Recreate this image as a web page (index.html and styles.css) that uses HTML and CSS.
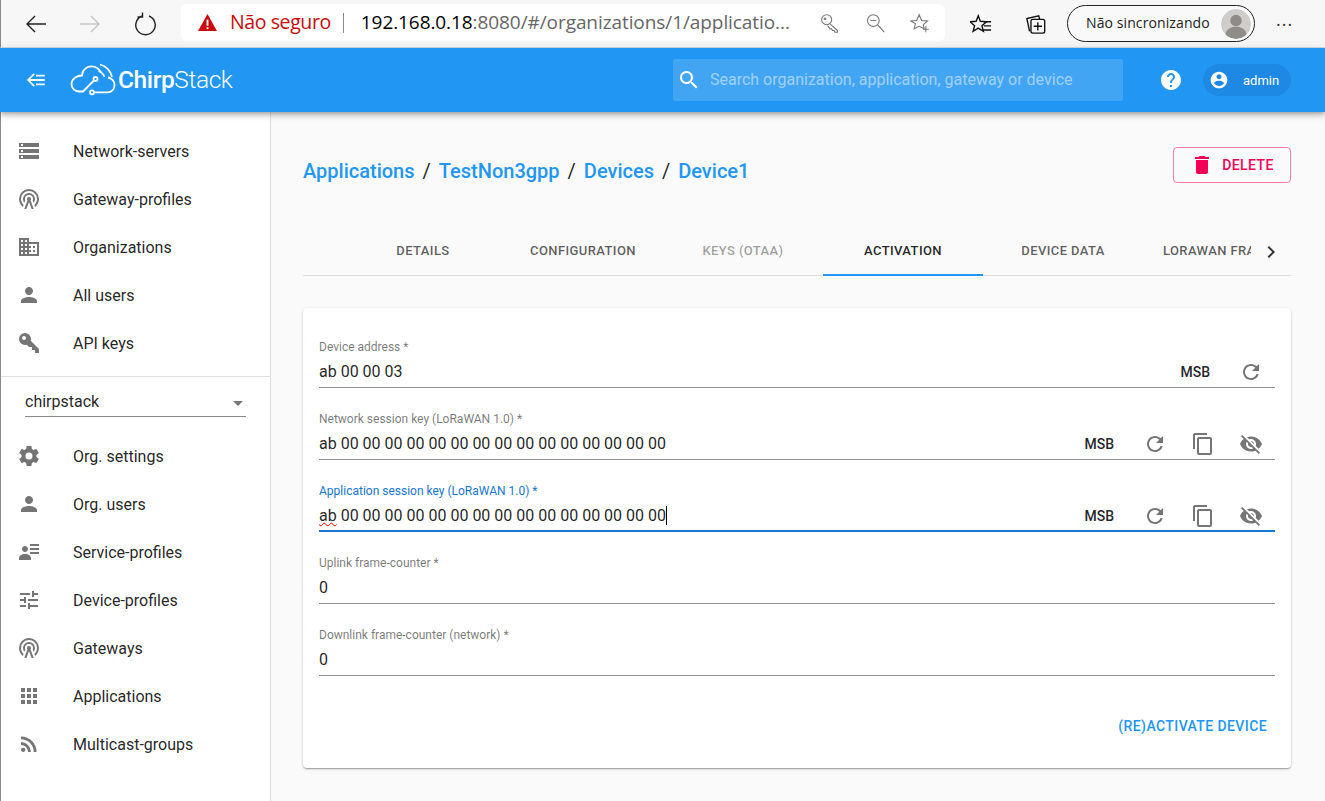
FILE: index.html
```html
<!DOCTYPE html>
<html>
	<head>
		<title>ChirpStack</title>
		<link rel="stylesheet" href="styles.css">
	</head>
	<body>
		<svg class="sprites" xmlns="http://www.w3.org/2000/svg">
			<symbol id="i-storage" viewBox="0 0 24 24"><path d="M2 20h20v-4H2v4zm2-3h2v2H4v-2zM2 4v4h20V4H2zm4 3H4V5h2v2zm-4 7h20v-4H2v4zm2-3h2v2H4v-2z"/></symbol>
			<symbol id="i-tower" viewBox="0 0 24 24"><path d="M12,10A2,2 0 0,1 14,12C14,12.5 13.82,12.94 13.53,13.29L16.7,22H14.57L12,14.93L9.43,22H7.3L10.47,13.29C10.18,12.94 10,12.5 10,12A2,2 0 0,1 12,10M12,8A4,4 0 0,0 8,12C8,12.5 8.1,13 8.28,13.46L7.4,15.86C6.53,14.81 6,13.47 6,12A6,6 0 0,1 12,6A6,6 0 0,1 18,12C18,13.47 17.47,14.81 16.6,15.86L15.72,13.46C15.9,13 16,12.5 16,12A4,4 0 0,0 12,8M12,4A8,8 0 0,0 4,12C4,14.36 5,16.5 6.64,17.94L5.92,19.94C3.54,18.11 2,15.23 2,12A10,10 0 0,1 12,2A10,10 0 0,1 22,12C22,15.23 20.46,18.11 18.08,19.94L17.36,17.94C19,16.5 20,14.36 20,12A8,8 0 0,0 12,4Z"/></symbol>
			<symbol id="i-domain" viewBox="0 0 24 24"><path d="M12 7V3H2v18h20V7H12zM6 19H4v-2h2v2zm0-4H4v-2h2v2zm0-4H4V9h2v2zm0-4H4V5h2v2zm4 12H8v-2h2v2zm0-4H8v-2h2v2zm0-4H8V9h2v2zm0-4H8V5h2v2zm10 12h-8v-2h2v-2h-2v-2h2v-2h-2V9h8v10zm-2-8h-2v2h2v-2zm0 4h-2v2h2v-2z"/></symbol>
			<symbol id="i-person" viewBox="0 0 24 24"><path d="M12 12c2.21 0 4-1.79 4-4s-1.79-4-4-4-4 1.79-4 4 1.79 4 4 4zm0 2c-2.67 0-8 1.34-8 4v2h16v-2c0-2.66-5.33-4-8-4z"/></symbol>
			<symbol id="i-key" viewBox="0 0 24 24"><path d="M22,18V22H18V19H15V16H12L9.74,13.74C9.19,13.91 8.61,14 8,14A6,6 0 0,1 2,8A6,6 0 0,1 8,2A6,6 0 0,1 14,8C14,8.61 13.91,9.19 13.74,9.74L22,18M7,5A2,2 0 0,0 5,7A2,2 0 0,0 7,9A2,2 0 0,0 9,7A2,2 0 0,0 7,5Z"/></symbol>
			<symbol id="i-settings" viewBox="0 0 24 24"><path d="M12,15.5A3.5,3.5 0 0,1 8.5,12A3.5,3.5 0 0,1 12,8.5A3.5,3.5 0 0,1 15.5,12A3.5,3.5 0 0,1 12,15.5M19.43,12.97C19.47,12.65 19.5,12.33 19.5,12C19.5,11.67 19.47,11.34 19.43,11L21.54,9.37C21.73,9.22 21.78,8.95 21.66,8.73L19.66,5.27C19.54,5.05 19.27,4.96 19.05,5.05L16.56,6.05C16.04,5.66 15.5,5.32 14.87,5.07L14.5,2.42C14.46,2.18 14.25,2 14,2H10C9.75,2 9.54,2.18 9.5,2.42L9.13,5.07C8.5,5.32 7.96,5.66 7.44,6.05L4.95,5.05C4.73,4.96 4.46,5.05 4.34,5.27L2.34,8.73C2.21,8.95 2.27,9.22 2.46,9.37L4.57,11C4.53,11.34 4.5,11.67 4.5,12C4.5,12.33 4.53,12.65 4.57,12.97L2.46,14.63C2.27,14.78 2.21,15.05 2.34,15.27L4.34,18.73C4.46,18.95 4.73,19.03 4.95,18.95L7.44,17.94C7.96,18.34 8.5,18.68 9.13,18.93L9.5,21.58C9.54,21.82 9.75,22 10,22H14C14.25,22 14.46,21.82 14.5,21.58L14.87,18.93C15.5,18.67 16.04,18.34 16.56,17.94L19.05,18.95C19.27,19.03 19.54,18.95 19.66,18.73L21.66,15.27C21.78,15.05 21.73,14.78 21.54,14.63L19.43,12.97Z"/></symbol>
			<symbol id="i-details" viewBox="0 0 24 24"><path d="M11,9C11,10.66 9.66,12 8,12C6.34,12 5,10.66 5,9C5,7.34 6.34,6 8,6C9.66,6 11,7.34 11,9M14,20H2V18C2,15.79 4.69,14 8,14C11.31,14 14,15.79 14,18M22,12V14H13V12M22,8V10H13V8M22,4V6H13V4Z"/></symbol>
			<symbol id="i-tune" viewBox="0 0 24 24"><path d="M3 17v2h6v-2H3zM3 5v2h10V5H3zm10 16v-2h8v-2h-8v-2h-2v6h2zM7 9v2H3v2h4v2h2V9H7zm14 4v-2H11v2h10zm-6-4h2V7h4V5h-4V3h-2v6z"/></symbol>
			<symbol id="i-apps" viewBox="0 0 24 24"><path d="M4 8h4V4H4v4zm6 12h4v-4h-4v4zm-6 0h4v-4H4v4zm0-6h4v-4H4v4zm6 0h4v-4h-4v4zm6-10v4h4V4h-4zm-6 4h4V4h-4v4zm6 6h4v-4h-4v4zm0 6h4v-4h-4v4z"/></symbol>
			<symbol id="i-rss" viewBox="0 0 24 24"><path d="M6.18,15.64A2.18,2.18 0 0,1 8.36,17.82C8.36,19 7.38,20 6.18,20C5,20 4,19 4,17.82A2.18,2.18 0 0,1 6.18,15.64M4,4.44A15.56,15.56 0 0,1 19.56,20H16.73A12.73,12.73 0 0,0 4,7.27V4.44M4,10.1A9.9,9.9 0 0,1 13.9,20H11.07A7.07,7.07 0 0,0 4,12.93V10.1Z"/></symbol>
			<symbol id="i-refresh" viewBox="0 0 24 24"><path d="M17.65 6.35C16.2 4.9 14.21 4 12 4c-4.42 0-7.99 3.58-7.99 8s3.57 8 7.99 8c3.73 0 6.84-2.55 7.73-6h-2.08c-.82 2.33-3.04 4-5.65 4-3.31 0-6-2.69-6-6s2.69-6 6-6c1.66 0 3.14.69 4.22 1.78L13 11h7V4l-2.35 2.35z"/></symbol>
			<symbol id="i-copy" viewBox="0 0 24 24"><path d="M16 1H4c-1.1 0-2 .9-2 2v14h2V3h12V1zm3 4H8c-1.1 0-2 .9-2 2v14c0 1.1.9 2 2 2h11c1.1 0 2-.9 2-2V7c0-1.1-.9-2-2-2zm0 16H8V7h11v14z"/></symbol>
			<symbol id="i-eye-off" viewBox="0 0 24 24"><path d="M12 7c2.76 0 5 2.24 5 5 0 .65-.13 1.26-.36 1.83l2.92 2.92c1.51-1.26 2.7-2.89 3.43-4.75-1.73-4.39-6-7.5-11-7.5-1.4 0-2.74.25-3.98.7l2.16 2.16C10.74 7.13 11.35 7 12 7zM2 4.27l2.28 2.28.46.46C3.08 8.3 1.78 10.02 1 12c1.73 4.39 6 7.5 11 7.5 1.55 0 3.03-.3 4.38-.84l.42.42L19.73 22 21 20.73 3.27 3 2 4.27zM7.53 9.8l1.55 1.55c-.05.21-.08.43-.08.65 0 1.66 1.34 3 3 3 .22 0 .44-.03.65-.08l1.55 1.55c-.67.33-1.41.53-2.2.53-2.76 0-5-2.24-5-5 0-.79.2-1.53.53-2.2zm4.31-.78l3.15 3.15.02-.16c0-1.66-1.34-3-3-3l-.17.01z"/></symbol>
		</svg>

		<header class="browser-bar">
			<svg class="nav-icon" viewBox="0 0 24 24"><path d="M22 12H3M11 4l-8 8 8 8" fill="none" stroke="#222" stroke-width="1.4"/></svg>
			<svg class="nav-icon" viewBox="0 0 24 24"><path d="M2 12h19M13 4l8 8-8 8" fill="none" stroke="#c4c4c4" stroke-width="1.4"/></svg>
			<svg class="nav-icon" viewBox="0 0 24 24"><path d="M8 4a9.700 9.700 0 1 0 7 0M8.500 .5v4.500h-5" fill="none" stroke="#222" stroke-width="1.4"/></svg>
			<div class="address">
				<svg class="warn" viewBox="0 0 20 18"><path d="M10 0l10 18H0z" fill="#c80a0a"/><rect x="9" y="6" width="2" height="6.5" fill="#fff"/><rect x="9" y="14" width="2" height="2" fill="#fff"/></svg>
				<span class="not-secure">Não seguro</span>
				<span class="address-sep"></span>
				<span class="url"><b>192.168.0.18</b>:8080/#/organizations/1/applicatio...</span>
				<svg class="addr-icon key-icon" viewBox="0 0 24 24"><circle cx="8" cy="8" r="6"/><circle cx="6" cy="7" r="1"/><path d="M12 13l9 8v2h-3l-1-2h-2l-1-2h-2l-3-4"/></svg>
				<svg class="addr-icon" viewBox="0 0 24 24"><circle cx="10" cy="9" r="7"/><path d="M15 14l8 9M6.500 9h7"/></svg>
				<svg class="addr-icon" viewBox="0 0 24 24"><path d="M11 2l3 7 7 .6-5 4.400 1 5-6-3-6 3 1.500-6.400L1 9.600 8 9zM19 16v7M15.500 19.500h7"/></svg>
			</div>
			<svg class="tool-icon" viewBox="0 0 24 24"><path d="M9 3l2.300 6 6.700.5-5 4.300 1.600 6.200L9 16.500 3.400 20 5 13.800 0 9.500 6.700 9z" fill="none" stroke="#111" stroke-width="1.500"/><path d="M15 9.500h8M15 14h8M14 18.500h9" stroke="#111" stroke-width="1.500"/></svg>
			<svg class="tool-icon" viewBox="0 0 24 24"><path d="M5 20L2 6l13-3 1 4" fill="none" stroke="#111" stroke-width="1.500"/><rect x="6.500" y="7" width="15" height="15" rx="2" fill="#f7f7f7" stroke="#111" stroke-width="1.500"/><path d="M14 10v9M9.500 14.500h9" stroke="#111" stroke-width="1.500"/></svg>
			<div class="sync">
				<span class="sync-label">Não sincronizando</span>
				<span class="sync-avatar">
					<svg viewBox="0 0 34 34"><circle cx="17" cy="17" r="17" fill="#cfcdca"/><circle cx="17" cy="13" r="6.500" fill="#8f8c88"/><path d="M5 29c1-7 7-9 12-9s11 2 12 9c-3 3-7 5-12 5S8 32 5 29z" fill="#8f8c88"/></svg>
				</span>
			</div>
			<span class="more">···</span>
		</header>

		<div class="appbar">
			<svg class="collapse" viewBox="0 0 24 24"><path d="M10 5l-7 7 7 7M4 12h18M12 7h10M12 17h10" fill="none" stroke="#fff" stroke-width="2"/></svg>
			<div class="logo">
				<svg viewBox="0 0 46 34"><g fill="none" stroke="#fff" stroke-width="1.800"><path d="M24 29.300H38C42 29.300 44.500 26 44.500 22C44.500 18 41.500 15 38 14.500M31 9.500C29 5.500 25.500 3.300 21.500 3.300C16 3.300 12 7.500 12 12.500C7.500 12.500 1.500 15.500 1.500 21C1.500 25.500 5 28.500 9 28.500H13L24 17.500"/><path d="M30 1.500C36 3 41 8 42 14M28.500 8C31.500 9 33.500 11 34.500 14"/><circle cx="25.500" cy="16" r="2"/><circle cx="22" cy="29.300" r="2"/></g></svg>
				<span class="logo-text"><b>Chirp</b>Stack</span>
			</div>
			<div class="search">
				<svg class="icon" viewBox="0 0 24 24"><path d="M15.5 14h-.79l-.28-.27C15.41 12.590 16 11.110 16 9.500 16 5.910 13.090 3 9.500 3S3 5.910 3 9.500 5.910 16 9.500 16c1.610 0 3.090-.59 4.230-1.570l.27.28v.79l5 4.990L20.490 19l-4.990-5zm-6 0C7.010 14 5 11.990 5 9.500S7.010 5 9.500 5 14 7.010 14 9.500 11.990 14 9.500 14z"/></svg>
				<span>Search organization, application, gateway or device</span>
			</div>
			<svg class="help" viewBox="0 0 24 24" fill="#fff"><path d="M12 2C6.480 2 2 6.480 2 12s4.480 10 10 10 10-4.480 10-10S17.520 2 12 2zm1 17h-2v-2h2v2zm2.070-7.750l-.9.920C13.450 12.900 13 13.500 13 15h-2v-.5c0-1.100.45-2.100 1.170-2.830l1.240-1.260c.37-.36.59-.86.59-1.410 0-1.100-.9-2-2-2s-2 .9-2 2H8c0-2.210 1.790-4 4-4s4 1.790 4 4c0 .88-.36 1.680-.93 2.250z"/></svg>
			<div class="user-chip">
				<svg viewBox="0 0 24 24" fill="#fff"><path d="M12 2C6.480 2 2 6.480 2 12s4.480 10 10 10 10-4.480 10-10S17.520 2 12 2zm0 3c1.660 0 3 1.340 3 3s-1.340 3-3 3-3-1.340-3-3 1.340-3 3-3zm0 14.200c-2.500 0-4.710-1.280-6-3.220.03-1.990 4-3.080 6-3.080 1.990 0 5.970 1.090 6 3.080-1.290 1.940-3.500 3.220-6 3.220z"/></svg>
				<span>admin</span>
			</div>
		</div>

		<div class="layout">
			<nav class="sidebar">
				<ul class="nav-list">
					<li><svg class="icon"><use href="#i-storage"/></svg>Network-servers</li>
					<li><svg class="icon"><use href="#i-tower"/></svg>Gateway-profiles</li>
					<li><svg class="icon"><use href="#i-domain"/></svg>Organizations</li>
					<li><svg class="icon"><use href="#i-person"/></svg>All users</li>
					<li><svg class="icon"><use href="#i-key"/></svg>API keys</li>
				</ul>
				<div class="org-select">
					<div class="org-select-box">chirpstack<span class="caret"></span></div>
				</div>
				<ul class="nav-list">
					<li><svg class="icon"><use href="#i-settings"/></svg>Org. settings</li>
					<li><svg class="icon"><use href="#i-person"/></svg>Org. users</li>
					<li><svg class="icon"><use href="#i-details"/></svg>Service-profiles</li>
					<li><svg class="icon"><use href="#i-tune"/></svg>Device-profiles</li>
					<li><svg class="icon"><use href="#i-tower"/></svg>Gateways</li>
					<li><svg class="icon"><use href="#i-apps"/></svg>Applications</li>
					<li><svg class="icon"><use href="#i-rss"/></svg>Multicast-groups</li>
				</ul>
			</nav>

			<main class="content">
				<div class="title-row">
					<div class="breadcrumb">
						<a>Applications</a><i>/</i><a>TestNon3gpp</a><i>/</i><a>Devices</a><i>/</i><a>Device1</a>
					</div>
					<button class="delete-btn">
						<svg viewBox="0 0 24 24" fill="#f50057"><path d="M6 19c0 1.100.9 2 2 2h8c1.100 0 2-.9 2-2V7H6v12zM19 4h-3.500l-1-1h-5l-1 1H5v2h14V4z"/></svg>
						Delete
					</button>
				</div>

				<div class="tabs">
					<div class="tab">Details</div>
					<div class="tab">Configuration</div>
					<div class="tab tab-disabled">Keys (OTAA)</div>
					<div class="tab tab-active">Activation</div>
					<div class="tab">Device data</div>
					<div class="tab tab-clipped"><span>LoRaWAN frames</span></div>
					<svg class="tab-next" viewBox="0 0 24 24"><path d="M10 6L8.590 7.410 13.170 12l-4.580 4.590L10 18l6-6z"/></svg>
				</div>

				<section class="card">
					<div class="field">
						<label>Device address *</label>
						<div class="field-row">
							<span class="field-value">ab 00 00 03</span>
							<span class="msb">MSB</span>
							<svg class="icon field-icon"><use href="#i-refresh"/></svg>
						</div>
					</div>
					<div class="field">
						<label>Network session key (LoRaWAN 1.0) *</label>
						<div class="field-row">
							<span class="field-value">ab 00 00 00 00 00 00 00 00 00 00 00 00 00 00 00</span>
							<span class="msb">MSB</span>
							<svg class="icon field-icon"><use href="#i-refresh"/></svg>
							<svg class="icon field-icon"><use href="#i-copy"/></svg>
							<svg class="icon field-icon"><use href="#i-eye-off"/></svg>
						</div>
					</div>
					<div class="field field-focused">
						<label>Application session key (LoRaWAN 1.0) *</label>
						<div class="field-row">
							<span class="field-value"><span class="misspelled">ab</span> 00 00 00 00 00 00 00 00 00 00 00 00 00 00 00<span class="text-cursor"></span></span>
							<span class="msb">MSB</span>
							<svg class="icon field-icon"><use href="#i-refresh"/></svg>
							<svg class="icon field-icon"><use href="#i-copy"/></svg>
							<svg class="icon field-icon"><use href="#i-eye-off"/></svg>
						</div>
					</div>
					<div class="field">
						<label>Uplink frame-counter *</label>
						<div class="field-row">
							<span class="field-value">0</span>
						</div>
					</div>
					<div class="field">
						<label>Downlink frame-counter (network) *</label>
						<div class="field-row">
							<span class="field-value">0</span>
						</div>
					</div>
					<div class="card-actions">
						<button class="text-btn">(Re)activate device</button>
					</div>
				</section>
			</main>
		</div>
	</body>
</html>
```

FILE: styles.css
```css
* {
	margin: 0; padding: 0;
	box-sizing: border-box;
}

html, body {
	width: 1325px;
	height: 801px;
	overflow: hidden;
}

body {
	font-family: "Roboto", sans-serif;
	font-size: 16px;
	color: rgba(0, 0, 0, 0.87);
	background: #fafafa;
}

ul {
	list-style: none;
}

.sprites {
	display: none;
}

.icon {
	width: 24px;
	height: 24px;
	fill: #757575;
	flex-shrink: 0;
}

/* browser chrome */
.browser-bar {
	height: 48px;
	background: #f7f7f7;
	display: flex;
	align-items: center;
	padding: 0 0 0 23px;
	border-left: 1px solid #8a8a8a;
	border-bottom: 1px solid #d5dde4;
	font-family: "Open Sans", sans-serif;
}

.nav-icon {
	width: 24px;
	height: 24px;
	margin-right: 31px;
}

.nav-icon:nth-child(2) {
	margin-left: -1px;
}

.nav-icon:nth-child(3) {
	margin-left: 1px;
	margin-right: 23px;
}

.address {
	width: 764px;
	height: 37px;
	margin-top: -2px;
	background: #fff;
	border-radius: 6px;
	display: flex;
	align-items: center;
	padding: 0 15px 0 17px;
}

.warn {
	width: 19px;
	height: 17px;
	margin-right: 13px;
}

.not-secure {
	color: #c80a0a;
	font-size: 19.5px;
	letter-spacing: -0.4px;
	margin-top: -2px;
}

.address-sep {
	width: 1px;
	height: 20px;
	background: #888;
	margin: 0 17px 0 12px;
}

.url {
	font-size: 19px;
	color: #666;
	white-space: nowrap;
	letter-spacing: -0.08px;
	flex: 1;
	margin-top: -2px;
}

.url b {
	font-weight: 400;
	color: #000;
}

.addr-icon {
	width: 20px;
	height: 20px;
	margin-left: 25px;
	fill: none;
	stroke: #777;
	stroke-width: 1.300;
}

.key-icon {
	margin-left: 0;
}

.tool-icon {
	width: 22px;
	height: 22px;
	margin-left: 25px;
	margin-top: 1px;
}

.tool-icon + .tool-icon {
	margin-left: 33px;
}

.sync {
	width: 188px;
	height: 37px;
	margin-left: 20px;
	border: 1.500px solid #222;
	border-radius: 19px;
	display: flex;
	align-items: center;
	justify-content: space-between;
	padding: 0 0 0 18px;
	font-size: 14px;
	letter-spacing: 0.1px;
	color: #222;
	background: #f9f9f9;
}

.sync-label {
	margin-top: -2px;
}

.sync-avatar {
	width: 30px;
	height: 30px;
	margin-right: 3px;
	border-radius: 50%;
	overflow: hidden;
}

.sync-avatar svg {
	display: block;
	width: 30px;
	height: 30px;
}

.more {
	margin-left: 21px;
	font-size: 18px;
	color: #333;
	letter-spacing: 1px;
}

/* application bar */
.appbar {
	height: 64px;
	background: #2196f3;
	display: flex;
	align-items: center;
	position: relative;
	box-shadow: 0 2px 4px -1px rgba(0,0,0,0.2), 0 4px 5px 0 rgba(0,0,0,0.14), 0 1px 10px 0 rgba(0,0,0,0.12);
	padding: 0 34px 0 24px;
}

.collapse {
	width: 24px;
	height: 24px;
	margin-right: 22px;
	transform: scale(0.88);
}

.logo {
	display: flex;
	align-items: center;
	width: 603px;
}

.logo svg {
	width: 46px;
	height: 34px;
	margin-right: 2px;
}

.logo-text {
	color: #fff;
	font-size: 24.5px;
	font-weight: 300;
	letter-spacing: -0.4px;
	margin-top: -2px;
}

.logo-text b {
	font-weight: 500;
}

.search {
	width: 450px;
	height: 42px;
	background: rgba(255, 255, 255, 0.15);
	border-radius: 2px;
	display: flex;
	align-items: center;
	padding-left: 4px;
	font-size: 16px;
	color: rgba(255, 255, 255, 0.5);
}

.search .icon {
	fill: #fff;
}

.search span {
	margin: -2px 0 0 9px;
}

.help {
	width: 24px;
	height: 24px;
	margin-left: 36px;
}

.user-chip {
	width: 88px;
	height: 32px;
	margin-left: 20px;
	border-radius: 16px;
	background: #1e88e5;
	display: flex;
	align-items: center;
	padding-left: 6px;
	color: #fff;
	font-size: 13px;
}

.user-chip svg {
	width: 20px;
	height: 20px;
}

.user-chip span {
	margin-left: 14px;
}

/* page body */
.layout {
	display: flex;
	height: 689px;
}

.sidebar {
	width: 271px;
	background: #fff;
	border-right: 1px solid #e0e0e0;
	border-left: 1px solid #8a8a8a;
	padding-top: 15px;
	flex-shrink: 0;
}

.nav-list li {
	height: 48px;
	display: flex;
	align-items: center;
	padding-left: 16px;
	font-size: 16px;
	color: rgba(0, 0, 0, 0.87);
}

.nav-list .icon {
	margin-right: 32px;
}

.org-select {
	border-top: 1px solid #e0e0e0;
	height: 56px;
	margin-top: 9px;
	padding: 8px 24px 0 24px;
}

.org-select-box {
	height: 32px;
	border-bottom: 1px solid #8a8a8a;
	display: flex;
	align-items: center;
	justify-content: space-between;
	font-size: 16px;
	padding: 2px 3px 0 0;
}

.caret {
	width: 0;
	height: 0;
	border-left: 5px solid transparent;
	border-right: 5px solid transparent;
	border-top: 5px solid #777;
	margin-top: 4px;
}

.content {
	flex: 1;
	padding: 35px 34px 0 32px;
	min-width: 0;
}

.title-row {
	display: flex;
	justify-content: space-between;
	align-items: center;
	height: 36px;
}

.breadcrumb {
	font-size: 20px;
	font-weight: 500;
	display: flex;
	white-space: nowrap;
	margin-top: 12px;
}

.breadcrumb a {
	color: #2196f3;
}

.breadcrumb i {
	font-style: normal;
	font-weight: 400;
	margin: 0 8px;
	color: rgba(0, 0, 0, 0.87);
}

.delete-btn {
	width: 118px;
	height: 36px;
	border: 1px solid rgba(245, 0, 87, 0.5);
	border-radius: 4px;
	background: transparent;
	color: #f50057;
	font-family: "Roboto", sans-serif;
	font-size: 14px;
	font-weight: 500;
	letter-spacing: 0.4px;
	text-transform: uppercase;
	display: flex;
	align-items: center;
	justify-content: center;
	gap: 8px;
}

.delete-btn svg {
	width: 24px;
	height: 24px;
}

.tabs {
	display: flex;
	height: 49px;
	margin-top: 44px;
	padding-left: 40px;
	border-bottom: 1px solid #e0e0e0;
	position: relative;
}

.tab {
	width: 160px;
	flex-shrink: 0;
	padding-bottom: 2px;
	font-size: 13px;
	font-weight: 500;
	letter-spacing: 0.4px;
	text-transform: uppercase;
	color: rgba(0, 0, 0, 0.64);
	display: flex;
	align-items: center;
	justify-content: center;
}

.tab-disabled {
	color: rgba(0, 0, 0, 0.38);
}

.tab-active {
	color: rgba(0, 0, 0, 0.87);
	border-bottom: 2px solid #2196f3;
	height: 49px;
	padding-bottom: 0;
}

.tab-clipped {
	width: 108px;
	justify-content: flex-start;
	padding-left: 20px;
	overflow: hidden;
	white-space: nowrap;
}

.tab-next {
	width: 24px;
	height: 24px;
	margin: 13px 0 0 8px;
	fill: #333;
}

.card {
	margin-top: 32px;
	height: 460px;
	background: #fff;
	border-radius: 4px;
	box-shadow: 0 1px 3px 0 rgba(0,0,0,0.2), 0 1px 1px 0 rgba(0,0,0,0.14), 0 2px 1px -1px rgba(0,0,0,0.12);
	padding: 28px 16px 0;
}

.field {
	height: 52px;
	margin-bottom: 20px;
	border-bottom: 1px solid #8f8f8f;
}

.field label {
	display: block;
	height: 20px;
	font-size: 12px;
	line-height: 22px;
	color: rgba(0, 0, 0, 0.54);
}

.field-row {
	height: 31px;
	display: flex;
	align-items: center;
	font-size: 16px;
}

.field-value {
	flex: 1;
	white-space: nowrap;
}

.msb {
	font-size: 14px;
	font-weight: 500;
	margin-right: 29px;
}

.field-icon {
	width: 24px;
	height: 24px;
	margin-right: 12px;
}

.field-icon + .field-icon {
	margin-left: 12px;
}

.field-focused {
	border-bottom: 2px solid #1976d2;
}

.field-focused label {
	color: #1976d2;
}

.misspelled {
	text-decoration: underline wavy #e00;
	text-decoration-thickness: 1px;
}

.text-cursor {
	display: inline-block;
	width: 1px;
	height: 19px;
	background: #000;
	vertical-align: -4px;
}

.card-actions {
	display: flex;
	justify-content: flex-end;
	margin-top: 36px;
}

.text-btn {
	border: 0;
	background: transparent;
	color: #2196f3;
	font-family: "Roboto", sans-serif;
	font-size: 14px;
	font-weight: 500;
	letter-spacing: 0.4px;
	text-transform: uppercase;
	padding: 6px 8px;
}
```
